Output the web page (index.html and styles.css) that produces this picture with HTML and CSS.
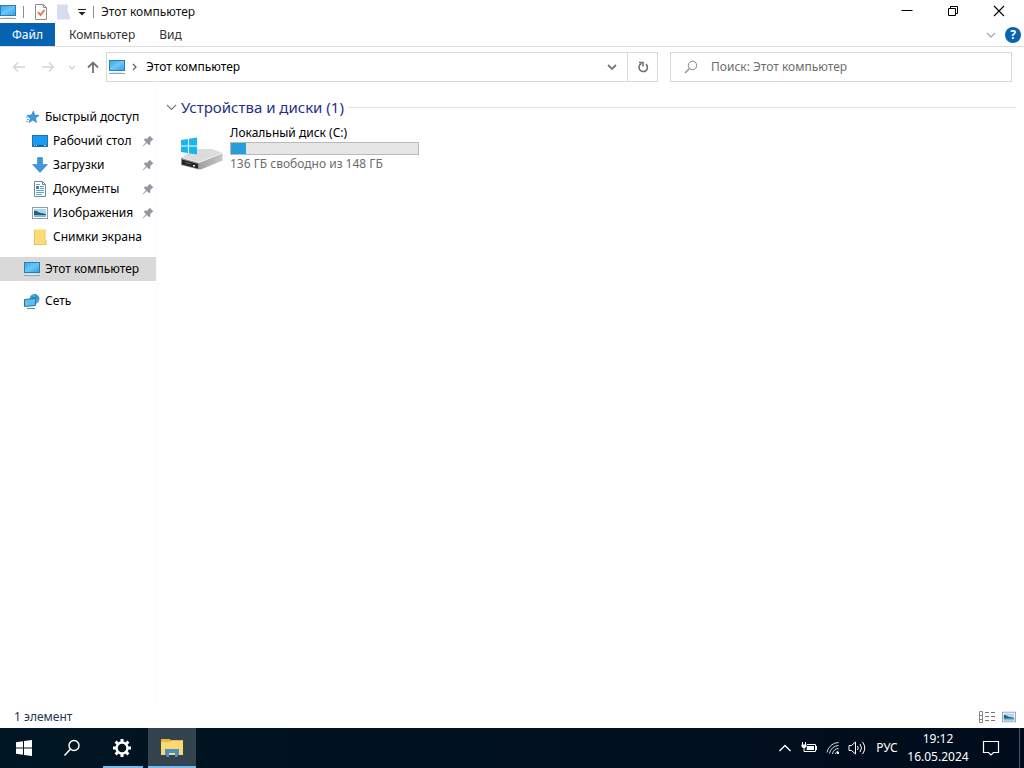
FILE: index.html
```html
<!DOCTYPE html>
<html lang="ru">
<head>
<meta charset="utf-8">
<meta name="viewport" content="width=device-width, initial-scale=1">
<title>Этот компьютер</title>
<link rel="stylesheet" href="styles.css">
</head>
<body>
<svg class="defs" width="0" height="0" aria-hidden="true">
  <defs>
    <linearGradient id="screen" x1="0" y1="0" x2="1" y2="1"><stop offset="0" stop-color="#35a9ee"/><stop offset=".5" stop-color="#6cc6f8"/><stop offset="1" stop-color="#2f9fe6"/></linearGradient>
    <linearGradient id="drive" x1="0" y1="0" x2="1" y2="0"><stop offset="0" stop-color="#a0a0a0"/><stop offset="1" stop-color="#c6c6c6"/></linearGradient>
    <symbol id="pc" viewBox="0 0 16 16"><rect x=".5" y="1.5" width="15" height="10" fill="url(#screen)" stroke="#2b7fb4"/><path d="M0 14.5h16" stroke="#8ea3b3"/><path d="M3 13.5h10" stroke="#e3eaef"/></symbol>
    <symbol id="pin" viewBox="0 0 12 12"><path d="M7.500 .5l4 4-1.200.4-2 2.200.1 2-1.200 1.100L4.800 7.900 1 11.500l-.5-.5 3.600-3.800L1.800 4.800l1.100-1.200 2 .1 2.200-2z" fill="#9298a0"/></symbol>
    <symbol id="picture" viewBox="0 0 16 12"><rect x=".5" y=".5" width="15" height="11" fill="#fff" stroke="#8aa0b0"/><rect x="2" y="2" width="12" height="8" fill="#a9d8f3"/><path d="M2 4c3-1 4 2 7 2s3 1 5 1v1H2z" fill="#2b5f7c"/><path d="M2 8h12v2H2z" fill="#7dbbdd"/></symbol>
  </defs>
</svg>
<div class="window">
  <header class="titlebar">
    <svg class="i16" aria-hidden="true"><use href="#pc"/></svg>
    <span class="divider"></span>
    <button class="quick" aria-label="Свойства"><svg width="14" height="16" viewBox="0 0 14 16"><path d="M1.500 .5h8l3 3v12h-11z" fill="#fafafa" stroke="#8e8e8e"/><path d="M9.500 .5v3h3" fill="none" stroke="#8e8e8e"/><path d="M4 8l2.500 3L10.500 6" fill="none" stroke="#e0764a" stroke-width="1.800"/></svg></button>
    <button class="quick" aria-label="Новая папка"><svg width="14" height="16" viewBox="0 0 14 16"><path d="M1 .5h10v9l2 1v5H1z" fill="#d5dff0"/><path d="M11 .5v9l2 1v5" fill="none" stroke="#c5d1e5"/></svg></button>
    <button class="quick more" aria-label="Настройка панели"><svg width="8" height="8" viewBox="0 0 8 8"><path d="M0 1.500h8" stroke="#222"/><path d="M.5 4h7L4 7.500z" fill="#222"/></svg></button>
    <span class="divider"></span>
    <h1 class="title">Этот компьютер</h1>
    <div class="controls">
      <button aria-label="Свернуть"><svg width="12" height="12" viewBox="0 0 12 12"><path d="M.5 5.500h11" stroke="#000"/></svg></button>
      <button aria-label="Восстановить"><svg width="12" height="12" viewBox="0 0 12 12"><path d="M1.500 3.500h7v7h-7zM3.500 3.500v-2h7v7h-2" fill="none" stroke="#000"/></svg></button>
      <button aria-label="Закрыть"><svg width="12" height="12" viewBox="0 0 12 12"><path d="M1 1l10 10M11 1L1 11" stroke="#000" stroke-width="1.100"/></svg></button>
    </div>
  </header>
  <nav class="ribbon" aria-label="Лента">
    <button class="tab file">Файл</button>
    <button class="tab">Компьютер</button>
    <button class="tab">Вид</button>
    <div class="help">
      <button aria-label="Развернуть ленту"><svg width="10" height="6" viewBox="0 0 10 6"><path d="M1 1l4 4 4-4" fill="none" stroke="#aaa" stroke-width="1.300"/></svg></button>
      <button class="question" aria-label="Справка">?</button>
    </div>
  </nav>
  <div class="toolbar">
    <div class="history">
      <button aria-label="Назад"><svg width="14" height="12" viewBox="0 0 14 12"><path d="M13 6H1.500M6 1.500L1.500 6 6 10.500" fill="none" stroke="#d4d4d4" stroke-width="1.400"/></svg></button>
      <button aria-label="Вперед"><svg width="14" height="12" viewBox="0 0 14 12"><path d="M1 6h11.500M8 1.500L12.500 6 8 10.500" fill="none" stroke="#d4d4d4" stroke-width="1.400"/></svg></button>
      <button class="recent" aria-label="Последние расположения"><svg width="8" height="5" viewBox="0 0 8 5"><path d="M1 1l3 3 3-3" fill="none" stroke="#d0d0d0" stroke-width="1.200"/></svg></button>
      <button class="up" aria-label="Вверх"><svg width="12" height="14" viewBox="0 0 12 14"><path d="M6 13V2M1 7.500L6 2.500l5 5" fill="none" stroke="#737373" stroke-width="1.800"/></svg></button>
    </div>
    <div class="address">
      <svg class="i16" aria-hidden="true"><use href="#pc"/></svg>
      <svg class="crumb" width="5" height="8" viewBox="0 0 5 8"><path d="M1 1l3 3-3 3" fill="none" stroke="#666" stroke-width="1.300"/></svg>
      <span class="path">Этот компьютер</span>
      <button class="drop" aria-label="Предыдущие расположения"><svg width="10" height="7" viewBox="0 0 10 7"><path d="M1 1l4 4 4-4" fill="none" stroke="#7a7a7a" stroke-width="1.900"/></svg></button>
      <button class="refresh" aria-label="Обновить"><svg width="12" height="12" viewBox="0 0 12 12"><path d="M9 3.200A4.200 4.200 0 1 1 4.500 2.500" fill="none" stroke="#707070" stroke-width="1.600"/><path d="M2 1.500h4v4" fill="none" stroke="#707070" stroke-width="1.500"/></svg></button>
    </div>
    <label class="search">
      <svg width="14" height="14" viewBox="0 0 14 14" aria-hidden="true"><circle cx="8.500" cy="5.500" r="4.200" fill="none" stroke="#888"/><path d="M5.500 8.500L1 13" stroke="#888" stroke-width="1.200"/></svg>
      <input type="search" placeholder="Поиск: Этот компьютер" aria-label="Поиск: Этот компьютер">
    </label>
  </div>
  <div class="body">
    <nav class="tree" aria-label="Область навигации">
      <ul>
        <li><a href="#" class="item"><svg class="i16" viewBox="0 0 16 16"><path d="M9.500 2l1 4 4.500.5-3.500 2.500 1 4.500-3.500-2.500-4 2.500L6.500 9.500 3 6.500l4.500-.5z" fill="#3c9be0" stroke="#2d7fc0" stroke-width=".7"/><path d="M2 8h3M3 10.500h2M2 12.500h2" stroke="#6bb7ea"/></svg><span>Быстрый доступ</span></a></li>
        <li><a href="#" class="item sub"><svg class="i16" viewBox="0 0 16 16"><rect x=".5" y="2.500" width="15" height="11" fill="#189bf0" stroke="#1876b8"/><path d="M1 12.500h14" stroke="#0d5c93"/><path d="M2 12.500h1M4 12.500h1M12 12.500h2" stroke="#9fd4f7"/></svg><span>Рабочий стол</span><svg class="pin"><use href="#pin"/></svg></a></li>
        <li><a href="#" class="item sub"><svg class="i16" viewBox="0 0 16 16"><path d="M5.500 .5h5v7h5L8 15.500.5 7.500h5z" fill="#3b98dd" stroke="#2f86c9" stroke-width=".6"/></svg><span>Загрузки</span><svg class="pin"><use href="#pin"/></svg></a></li>
        <li><a href="#" class="item sub"><svg class="i16" viewBox="0 0 16 16"><path d="M2.500 .5h8l3 3v12h-11z" fill="#fff" stroke="#73899b"/><path d="M10.500 .5v3h3" fill="none" stroke="#73899b"/><path d="M8 5.500h4M8 7.500h4M4 9.500h8M4 11.500h8M4 13.500h6M4 3.500h4" stroke="#5fa5d2"/><path d="M4 5h3v3H4z" fill="#3687bd"/></svg><span>Документы</span><svg class="pin"><use href="#pin"/></svg></a></li>
        <li><a href="#" class="item sub"><svg class="i16"><use href="#picture" y="2" width="16" height="12"/></svg><span>Изображения</span><svg class="pin"><use href="#pin"/></svg></a></li>
        <li><a href="#" class="item sub"><svg class="i16" viewBox="0 0 16 16"><path d="M2 .5h11v10l1.500 1v4H2z" fill="#fbdc78"/><path d="M2.500 1v14.500M13 .5v10l1 1v4H2" fill="none" stroke="#ecc559"/></svg><span>Снимки экрана</span></a></li>
        <li class="root"><a href="#" class="item selected" aria-current="page"><svg class="i16"><use href="#pc"/></svg><span>Этот компьютер</span></a></li>
        <li class="root"><a href="#" class="item"><svg class="i16" viewBox="0 0 16 16"><circle cx="10.500" cy="6" r="5" fill="#4ba7df"/><path d="M7 3c2 1 2 2 4 2M11 1c0 2 3 2 3 5M7 9l6-6" fill="none" stroke="#2674a6"/><path d="M.5 6.500l11-1v7l-11 1z" fill="#5fbdf2" stroke="#2674a6"/><path d="M3 15.500h8" stroke="#6a8aa0"/></svg><span>Сеть</span></a></li>
      </ul>
    </nav>
    <main class="content">
      <h2 class="group"><button aria-expanded="true"><svg width="11" height="7" viewBox="0 0 11 7"><path d="M1 1l4.500 4.500L10 1" fill="none" stroke="#7c7c7c" stroke-width="1.200"/></svg>Устройства и диски (1)</button></h2>
      <a href="#" class="disk">
        <svg width="44" height="36" viewBox="0 0 44 36" aria-hidden="true">
          <path d="M1 22.500L15 14h17l10.500 4L19 27.500z" fill="#dcdcdc"/><path d="M1 22.500l18 5v7L1 30z" fill="#8a8a8a"/><path d="M19 27.500L42.500 18v7.500L21 34.500h-2z" fill="url(#drive)"/><path d="M1 22.500l18 5L42.500 18" fill="none" stroke="#f0f0f0"/><path d="M2 24.500l16 4.500v4.500L2 29.500z" fill="#242424"/><path d="M5 27.500l6 1.500" stroke="#666"/><path d="M13 30h2v1.500h-2z" fill="#eee"/>
          <path d="M1 5l7-1v6.500H1zM9 3.800L17 2.500v8H9zM1 11.500h7V18l-7-1zM9 11.500h8v8L9 18.200z" fill="#18b5ee"/>
        </svg>
        <span class="info"><span>Локальный диск (C:)</span><span class="usage" role="meter" aria-label="Занято" aria-valuemin="0" aria-valuemax="148" aria-valuenow="12"><span class="used" style="width:8%"></span></span><span class="free">136 ГБ свободно из 148 ГБ</span></span>
      </a>
    </main>
  </div>
  <footer class="status">
    <span>1 элемент</span>
    <div class="views">
      <button aria-label="Таблица"><svg width="16" height="12" viewBox="0 0 16 12"><path d="M.5 .5h3v11h-3zM.5 4.500h3M.5 8.500h3" fill="none" stroke="#8a8a8a"/><path d="M6 1.500h4M12 1.500h4M6 5.500h4M12 5.500h4M6 9.500h4M12 9.500h4" stroke="#777"/></svg></button>
      <button aria-label="Крупные значки"><svg width="14" height="12"><use href="#picture" width="14" height="12"/></svg></button>
    </div>
  </footer>
</div>
<footer class="taskbar">
  <button class="task" aria-label="Пуск"><svg width="16" height="16" viewBox="0 0 16 16"><path d="M0 2.200l7-1v6.300H0zM8 1l8-1v7.500H8zM0 8.500h7v6.300l-7-1zM8 8.500h8V16l-8-1z" fill="#fff"/></svg></button>
  <button class="task" aria-label="Поиск"><svg width="18" height="18" viewBox="0 0 18 18"><circle cx="11" cy="6.500" r="5" fill="none" stroke="#fff" stroke-width="1.400"/><path d="M7.300 10.200L1.500 16.500" stroke="#fff" stroke-width="1.500"/></svg></button>
  <button class="task running" aria-label="Параметры"><svg width="20" height="20" viewBox="0 0 20 20"><circle cx="10" cy="10" r="5.500" fill="none" stroke="#fff" stroke-width="2.400"/><path d="M10 1v3M10 16v3M1 10h3M16 10h3M3.600 3.600l2.200 2.200M14.200 14.200l2.200 2.200M3.600 16.400l2.200-2.200M14.200 5.800l2.200-2.200" stroke="#fff" stroke-width="3"/></svg></button>
  <button class="task running active" aria-label="Проводник"><svg width="22" height="20" viewBox="0 0 22 20"><path d="M0 1h8l2 1h12v15H0z" fill="#e9b93c"/><path d="M0 4h9l1-1h12v14H0z" fill="#fad974"/><path d="M4 11h14v5l-2 3h-2v-4H8v4H6l-2-3z" fill="#4a90bd"/></svg></button>
  <div class="tray">
    <button aria-label="Скрытые значки"><svg width="14" height="8" viewBox="0 0 14 8"><path d="M1.500 7L7 1.500 12.500 7" fill="none" stroke="#fff" stroke-width="1.300"/></svg></button>
    <button aria-label="Батарея"><svg width="16" height="12" viewBox="0 0 16 12"><path d="M6 2.500h8.500v7H5" fill="none" stroke="#fff"/><path d="M6 4h7v4H5.500zM15 4h1v4h-1z" fill="#fff"/><path d="M1.500 0v3M4.500 0v3M3 5v4.500h3" fill="none" stroke="#fff"/><path d="M.5 2.500h5v2L4 6H2L.5 4.500z" fill="#fff"/></svg></button>
    <button aria-label="Сеть"><svg width="14" height="14" viewBox="0 0 14 14"><g fill="none" stroke="#ddd"><path d="M1 11.500A12 12 0 0 1 12.500 1.500M3.500 12.500a9.500 9.500 0 0 1 9-8M6.500 13a6.500 6.500 0 0 1 6-5.500M9.500 13a3.500 3.500 0 0 1 3-3"/></g><path d="M11 11h2v2h-2z" fill="#fff"/></svg></button>
    <button aria-label="Громкость"><svg width="18" height="14" viewBox="0 0 18 14"><path d="M1 4.500h2.500l4-3.500v12l-4-3.500H1z" fill="none" stroke="#fff"/><path d="M9.500 5q1.500 2 0 4M12 3q3 4 0 8M14.500 1q4.500 6 0 12" fill="none" stroke="#fff"/></svg></button>
    <button class="lang">РУС</button>
    <button class="clock"><time>19:12</time><time>16.05.2024</time></button>
    <button class="notes" aria-label="Уведомления"><svg width="18" height="18" viewBox="0 0 18 18"><path d="M1.500 2.500h15v11h-5L9 16l-2.500-2.500h-5z" fill="none" stroke="#fff" stroke-width="1.200"/></svg></button>
    <button class="peek" aria-label="Свернуть все окна"></button>
  </div>
</footer>
</body>
</html>
```
FILE: styles.css
```css
* { box-sizing: border-box; }
body {
  margin: 0;
  min-height: 100vh;
  display: flex;
  flex-direction: column;
  background: #fff;
  color: #111;
  font: 12px/16px "Noto Sans", "Open Sans", sans-serif;
}
button {
  display: flex;
  align-items: center;
  justify-content: center;
  padding: 0;
  border: 0;
  background: none;
  color: inherit;
  font: inherit;
}
a { color: inherit; text-decoration: none; }
svg { display: block; flex: none; }
h1, h2, ul { margin: 0; padding: 0; font-weight: 400; }
ul { list-style: none; }
.defs { position: absolute; }
.i16 { width: 16px; height: 16px; }
.window { flex: 1; display: flex; flex-direction: column; }

.titlebar { display: flex; align-items: center; height: 23px; }
.divider { width: 1px; height: 12px; margin: 0 10px 0 7px; background: #8c8c8c; }
.quick { width: 14px; margin-right: 8px; }
.quick.more { width: 8px; margin-right: 0; }
.quick.more + .divider { margin: 0 7px; }
.title { font-size: 12px; }
.controls { display: flex; align-self: stretch; margin-left: auto; margin-right: 2px; }
.controls button { width: 46px; height: 21px; }

.ribbon { display: flex; height: 24px; border-bottom: 1px solid #dcdcdc; color: #333; }
.tab { padding: 0 10px 0 14px; }
.tab.file { padding: 0 12px; background: #0663b1; color: #fff; }
.help { display: flex; align-items: center; gap: 9px; margin-left: auto; padding-right: 3px; }
.question { width: 16px; height: 16px; border-radius: 50%; background: #0b62b0; color: #fff; font-weight: 700; }

.toolbar { display: flex; align-items: center; padding: 5px 12px 5px 0; }
.history { display: flex; align-items: center; width: 106px; padding-left: 12px; gap: 15px; }
.history .recent { margin-right: -4px; margin-left: -2px; }
.address { flex: 548; display: flex; align-items: center; height: 30px; padding-left: 2px; border: 1px solid #d9d9d9; }
.crumb { margin: 0 9px 0 7px; }
.path { flex: 1; color: #000; }
.drop { width: 30px; align-self: stretch; }
.refresh { width: 30px; align-self: stretch; border-left: 1px solid #d9d9d9; }
.search { flex: 327; display: flex; align-items: center; gap: 13px; height: 30px; margin-left: 12px; padding-left: 13px; border: 1px solid #d9d9d9; }
.search input { flex: 1; min-width: 0; padding: 0; border: 0; outline: 0; background: none; font: inherit; color: #333; }
.search input::placeholder { color: #6d6d6d; opacity: 1; }

.body { flex: 1; display: flex; }
.tree { width: 157px; padding: 18px 0 0; border-right: 1px solid #f9f9f9; color: #000; }
.item { display: flex; align-items: center; gap: 5px; height: 24px; padding-left: 24px; white-space: nowrap; }
.item.sub { padding-left: 32px; }
.item.selected { background: #d9d9d9; }
.root { margin-top: 8px; }
.pin { width: 12px; height: 12px; margin-left: auto; margin-right: 2px; }

.content { flex: 1; padding: 9px 8px 0 9px; }
.group { display: flex; align-items: center; gap: 4px; color: #1e3287; font-size: 15px; line-height: 22px; }
.group button { gap: 4px; }
.group::after { content: ""; flex: 1; height: 1px; background: #e2e2e2; }
.disk { display: inline-flex; gap: 6px; margin-left: 14px; padding-top: 7px; color: #000; }
.disk svg { margin-top: 10px; }
.info { display: flex; flex-direction: column; }
.usage { width: 189px; height: 13px; margin: 1px 0; border: 1px solid #b9b9b9; background: #e6e6e6; }
.used { display: block; height: 100%; background: #26a0da; }
.free { color: #6d6d6d; }

.status { display: flex; align-items: center; justify-content: space-between; height: 23px; padding: 0 8px 0 14px; color: #1f3550; }
.views { display: flex; gap: 7px; }

.taskbar { display: flex; height: 40px; background: linear-gradient(90deg, #001522, #000c1c); color: #fff; }
.task { width: 48px; }
.task.running { width: 52px; background: linear-gradient(#76b9ed, #76b9ed) 7px bottom / 40px 2px no-repeat; }
.task.running.active { width: 48px; background: linear-gradient(#76b9ed, #76b9ed) bottom / 100% 2px no-repeat #34444e; }
.tray { display: flex; margin-left: auto; }
.tray button { width: 24px; }
.tray .lang { width: 36px; }
.tray .clock { width: 66px; flex-direction: column; gap: 2px; }
.tray .notes { width: 40px; margin-right: 8px; }
.tray .peek { width: 5px; border-left: 1px solid #4b5561; }
```
